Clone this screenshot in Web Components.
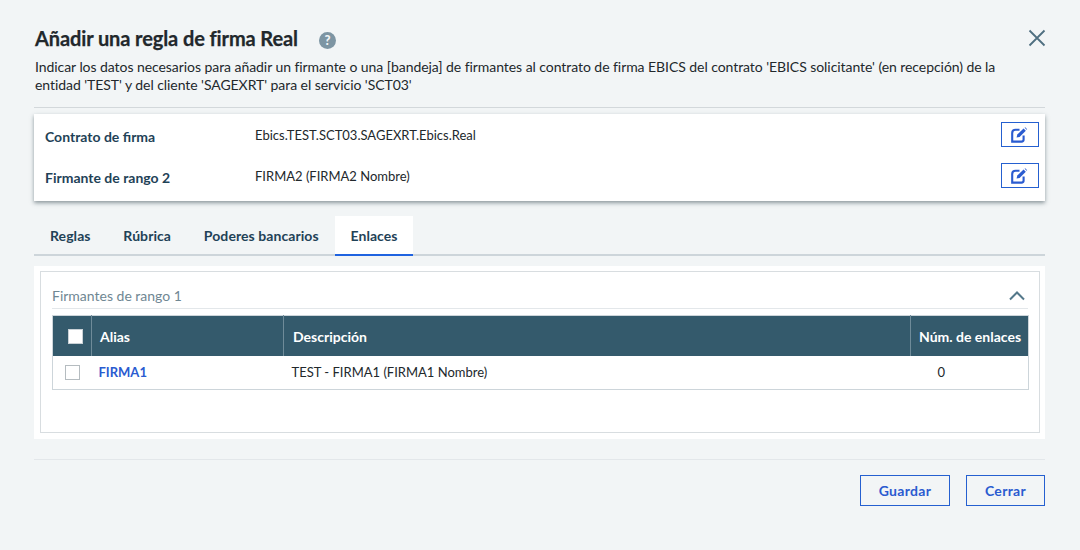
<!DOCTYPE html>
<html lang="es">
<head>
<meta charset="utf-8">
<title>Añadir una regla de firma</title>
<style>
    html, body { margin: 0; height: 100%; }
    body {
        background: #f2f5f6;
        font-family: Lato, "Open Sans", sans-serif;
        color: #22282c;
        overflow: hidden;
    }
</style>
</head>
<body>
<rule-dialog>
    <span slot="title">Añadir una regla de firma Real</span>
    <span slot="desc">Indicar los datos necesarios para añadir un firmante o una [bandeja] de firmantes al contrato de firma EBICS del contrato 'EBICS solicitante' (en recepción) de la entidad 'TEST' y del cliente 'SAGEXRT' para el servicio 'SCT03'</span>

    <summary-card slot="summary">
        <summary-row label="Contrato de firma" value="Ebics.TEST.SCT03.SAGEXRT.Ebics.Real"></summary-row>
        <summary-row label="Firmante de rango 2" value="FIRMA2 (FIRMA2 Nombre)"></summary-row>
    </summary-card>

    <tab-bar slot="tabs" items="Reglas|Rúbrica|Poderes bancarios|Enlaces" active="3"></tab-bar>

    <links-panel slot="panel" heading="Firmantes de rango 1"></links-panel>

    <outline-button slot="actions" style="width:90px">Guardar</outline-button>
    <outline-button slot="actions" style="width:79px">Cerrar</outline-button>
</rule-dialog>

<script>
class RuleDialog extends HTMLElement {
    constructor() {
        super();
        this.attachShadow({ mode: "open" });
    }

    connectedCallback() {
        this.shadowRoot.innerHTML = `
            <style>
                :host { display: block; padding: 26px 35px 0 34px; }
                .head { display: flex; align-items: flex-start; padding-left: 1px; height: 25px; }
                h1 {
                    margin: 0;
                    font-size: 20px;
                    line-height: 25px;
                    font-weight: 700;
                    color: #22282c;
                    letter-spacing: -0.1px;
                    -webkit-text-stroke: 0.25px #22282c;
                }
                .help { margin: 6px 0 0 21px; width: 17px; height: 17px; }
                .close { margin: 3px 0 0 auto; width: 18px; height: 18px; margin-right: -1px; }
                .desc {
                    margin: 7px 0 0 1px;
                    padding-right: 30px;
                    font-size: 14px;
                    line-height: 18px;
                    letter-spacing: -0.06px;
                    color: #22282c;
                }
                .rule { height: 1px; background: #d3d8db; margin-top: 13px; }
                .summary { margin-top: 6px; }
                .tabs { margin-top: 15px; }
                .panel { margin-top: 10px; }
                .rule2 { height: 1px; background: #e3e7ea; margin-top: 20px; }
                .actions { display: flex; justify-content: flex-end; gap: 16px; margin-top: 15px; }
            </style>
            <div class="head">
                <h1><slot name="title"></slot></h1>
                <svg class="help" viewBox="0 0 17 17">
                    <circle cx="8.5" cy="8.5" r="8.5" fill="#7d95a3"/>
                    <text x="8.5" y="13.2" text-anchor="middle" font-family="Lato" font-weight="900" font-size="13" fill="#f1f4f6">?</text>
                </svg>
                <svg class="close" viewBox="0 0 18 18" fill="none" stroke="#4f6f80" stroke-width="1.8">
                    <path d="M1.5 1.5 L16.5 16.5 M16.5 1.5 L1.5 16.5"/>
                </svg>
            </div>
            <div class="desc"><slot name="desc"></slot></div>
            <div class="rule"></div>
            <div class="summary"><slot name="summary"></slot></div>
            <div class="tabs"><slot name="tabs"></slot></div>
            <div class="panel"><slot name="panel"></slot></div>
            <div class="rule2"></div>
            <div class="actions"><slot name="actions"></slot></div>
        `;
    }
}

class SummaryCard extends HTMLElement {
    constructor() {
        super();
        this.attachShadow({ mode: "open" });
    }

    connectedCallback() {
        this.shadowRoot.innerHTML = `
            <style>
                :host {
                    display: flex;
                    flex-direction: column;
                    gap: 16px;
                    height: 87px;
                    box-sizing: border-box;
                    padding: 8px 6px 0 11px;
                    background: #fff;
                    box-shadow: 0 2px 4px rgba(40, 60, 70, 0.5);
                }
            </style>
            <slot></slot>
        `;
    }
}

class SummaryRow extends HTMLElement {
    constructor() {
        super();
        this.attachShadow({ mode: "open" });
    }

    connectedCallback() {
        this.shadowRoot.innerHTML = `
            <style>
                :host { display: flex; align-items: flex-start; height: 25px; font-size: 14px; }
                .label { width: 210px; font-weight: 700; color: #1f4257; line-height: 30px; }
                .value { flex: 1; font-size: 13px; line-height: 26px; color: #22282c; }
                button {
                    width: 38px;
                    height: 25px;
                    padding: 0 2px 0 0;
                    background: #fff;
                    border: 1px solid #2560d0;
                    display: flex;
                    align-items: center;
                    justify-content: center;
                }
            </style>
            <div class="label">${this.getAttribute("label")}</div>
            <div class="value">${this.getAttribute("value")}</div>
            <button>
                <svg width="17" height="17" viewBox="0 0 17 17" fill="none">
                    <path d="M8.5 3.8 H4.5 Q1.2 3.8 1.2 7 V15.6 H10.5 Q12.6 15.6 12.6 13.5 V9.5" stroke="#2a5bd0" stroke-width="2.1"/>
                    <path d="M5.6 11.6 L6.3 8.6 L12.6 2.6 L14.8 4.8 L8.6 10.9 Z" fill="#2a5bd0"/>
                    <path d="M13.6 1.8 L14.2 1.2 L16.2 3.2 L15.6 3.8 Z" fill="#2a5bd0"/>
                </svg>
            </button>
        `;
    }
}

class TabBar extends HTMLElement {
    constructor() {
        super();
        this.attachShadow({ mode: "open" });
    }

    connectedCallback() {
        const active = Number(this.getAttribute("active"));
        const tabs = this.getAttribute("items").split("|").map((name, i) =>
            `<div class="tab ${i === active ? "on" : ""}">${name}</div>`).join("");
        this.shadowRoot.innerHTML = `
            <style>
                :host {
                    display: flex;
                    align-items: flex-start;
                    gap: 0.8px;
                    height: 40px;
                    box-sizing: border-box;
                    border-bottom: 2px solid #cdd5da;
                    font-size: 14px;
                }
                .tab {
                    height: 38px;
                    box-sizing: border-box;
                    padding: 0 16px;
                    line-height: 40px;
                    font-weight: 700;
                    letter-spacing: 0.07px;
                    color: #1f4257;
                }
                .tab.on { height: 40px; padding: 0 15px; background: #fff; border-bottom: 2px solid #1f63e0; }
            </style>
            ${tabs}
        `;
    }
}

class LinksPanel extends HTMLElement {
    constructor() {
        super();
        this.attachShadow({ mode: "open" });
    }

    connectedCallback() {
        this.shadowRoot.innerHTML = `
            <style>
                :host { display: block; background: #fff; padding: 5px 5px 6px 6px; }
                .box { border: 1px solid #d8dde0; height: 162px; box-sizing: border-box; padding: 0 11px; }
                .legend {
                    display: flex;
                    align-items: center;
                    justify-content: space-between;
                    height: 37px;
                    box-sizing: border-box;
                    border-bottom: 1px solid #e3e7ea;
                    padding-top: 11px;
                    font-size: 14px;
                    color: #6f8793;
                }
                .legend svg { margin-right: 3px; }
                table {
                    margin-top: 6px;
                    width: 977px;
                    border-collapse: collapse;
                    table-layout: fixed;
                    font-size: 13px;
                    border: 1px solid #cdd5da;
                }
                th {
                    height: 40px;
                    padding: 0 0 0 8px;
                    background: #345a6c;
                    color: #fff;
                    text-align: left;
                    font-size: 14px;
                    font-weight: 700;
                    border-left: 1px solid #6f8b99;
                }
                th:first-child { border-left: 0; padding: 0; }
                th:nth-child(3) { padding-left: 9px; }
                td { height: 33px; box-sizing: border-box; padding: 0 0 1px 7px; color: #22282c; }
                td:first-child { padding: 0; }
                td:nth-child(3) { padding-left: 8px; }
                .check { display: block; box-sizing: border-box; width: 15px; height: 15px; }
                th .check { background: #fff; margin-left: 15px; border: 1px solid #c9d1d6; }
                td .check { border: 1px solid #b5bcc0; margin-left: 12px; }
                a { color: #2a5bd0; font-weight: 700; text-decoration: none; }
                td.num { padding-left: 27px; }
            </style>
            <div class="box">
                <div class="legend">
                    <span>${this.getAttribute("heading")}</span>
                    <svg width="16" height="10" viewBox="0 0 16 10" fill="none" stroke="#54788a" stroke-width="2"><path d="M1 8.5 L8 1.5 L15 8.5"/></svg>
                </div>
                <table>
                    <colgroup><col style="width:39px"><col style="width:192px"><col><col style="width:118px"></colgroup>
                    <tr><th><span class="check"></span></th><th>Alias</th><th>Descripción</th><th>Núm. de enlaces</th></tr>
                    <tr><td><span class="check"></span></td><td><a>FIRMA1</a></td><td>TEST - FIRMA1 (FIRMA1 Nombre)</td><td class="num">0</td></tr>
                </table>
            </div>
        `;
    }
}

class OutlineButton extends HTMLElement {
    constructor() {
        super();
        this.attachShadow({ mode: "open" });
    }

    connectedCallback() {
        this.shadowRoot.innerHTML = `
            <style>
                :host {
                    display: flex;
                    align-items: center;
                    justify-content: center;
                    height: 31px;
                    box-sizing: border-box;
                    border: 1px solid #2560d0;
                    color: #2a5bd0;
                    font-size: 14px;
                    font-weight: 700;
                    letter-spacing: 0.3px;
                }
            </style>
            <slot></slot>
        `;
    }
}

customElements.define("rule-dialog", RuleDialog);
customElements.define("summary-card", SummaryCard);
customElements.define("summary-row", SummaryRow);
customElements.define("tab-bar", TabBar);
customElements.define("links-panel", LinksPanel);
customElements.define("outline-button", OutlineButton);
</script>
</body>
</html>
